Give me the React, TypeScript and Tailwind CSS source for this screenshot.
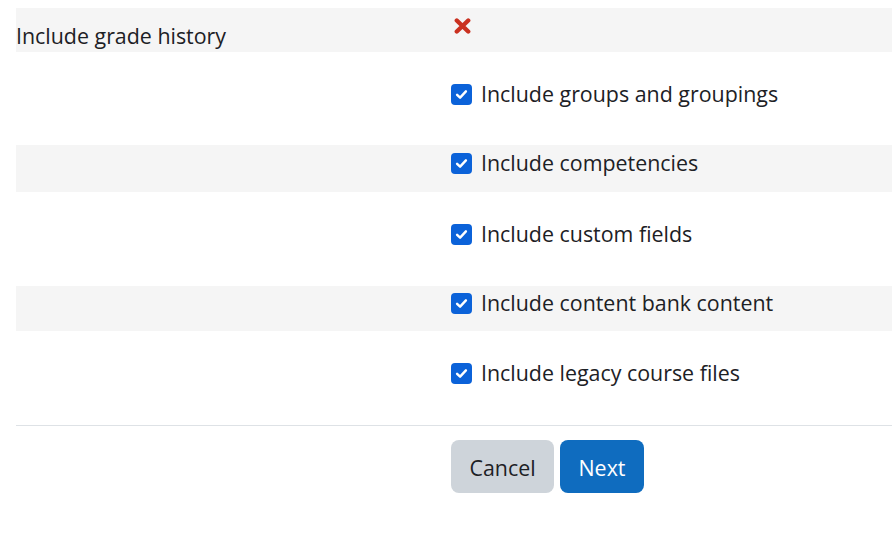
import React from "react";

const font = { fontFamily: '"Open Sans", "Noto Sans", sans-serif' };

function Check({ label }: { label: string }) {
  return (
    <div className="flex items-center h-[30px]">
      <span className="w-[21px] h-[21px] rounded-[4px] bg-[#0b62d9] flex items-center justify-center shrink-0">
        <svg width="15" height="15" viewBox="0 0 16 16" fill="none" className="block">
          <path d="M3.3 8.3 L6.5 11.4 L12.7 4.7" stroke="white" strokeWidth="2.6" strokeLinecap="round" strokeLinejoin="round" />
        </svg>
      </span>
      <span className="ml-[9px] text-[21.4px] leading-[30px] text-[#1d2125]">{label}</span>
    </div>
  );
}

export default function App() {
  return (
    <div className="w-[892px] h-[537px] bg-white pt-[8px] pl-[16px]" style={font}>
      <div className="flex bg-[#f5f5f5] h-[44px]">
        <div className="w-[435px] pt-[13px] text-[21.4px] leading-[30px] text-[#1d2125]">Include grade history</div>
        <div className="pt-[10px] pl-[3px]">
          <svg width="17" height="16" viewBox="0 0 17 16" className="block">
            <path d="M2.8 2.5 L14.2 13.5 M14.2 2.5 L2.8 13.5" stroke="#ca3120" strokeWidth="4.4" strokeLinecap="round" />
          </svg>
        </div>
      </div>
      <div className="flex h-[93px]">
        <div className="w-[435px]" />
        <div className="pt-[27px]"><Check label="Include groups and groupings" /></div>
      </div>
      <div className="flex h-[47px] bg-[#f5f5f5]">
        <div className="w-[435px]" />
        <div className="pt-[3px]"><Check label="Include competencies" /></div>
      </div>
      <div className="flex h-[94px]">
        <div className="w-[435px]" />
        <div className="pt-[27px]"><Check label="Include custom fields" /></div>
      </div>
      <div className="flex h-[45px] bg-[#f5f5f5]">
        <div className="w-[435px]" />
        <div className="pt-[2px]"><Check label="Include content bank content" /></div>
      </div>
      <div className="flex h-[94px]">
        <div className="w-[435px]" />
        <div className="pt-[27px]"><Check label="Include legacy course files" /></div>
      </div>
      <div className="border-t border-[#dee2e6] pt-[14px] flex">
        <div className="w-[435px]" />
        <div className="flex gap-[6px]">
          <button className="h-[53px] w-[103px] pt-[3px] rounded-[8px] bg-[#ced4da] text-[#1d2125] text-[21.4px]">Cancel</button>
          <button className="h-[53px] w-[84px] pt-[3px] rounded-[8px] bg-[#0f6cbf] text-white text-[21.4px]">Next</button>
        </div>
      </div>
    </div>
  );
}
